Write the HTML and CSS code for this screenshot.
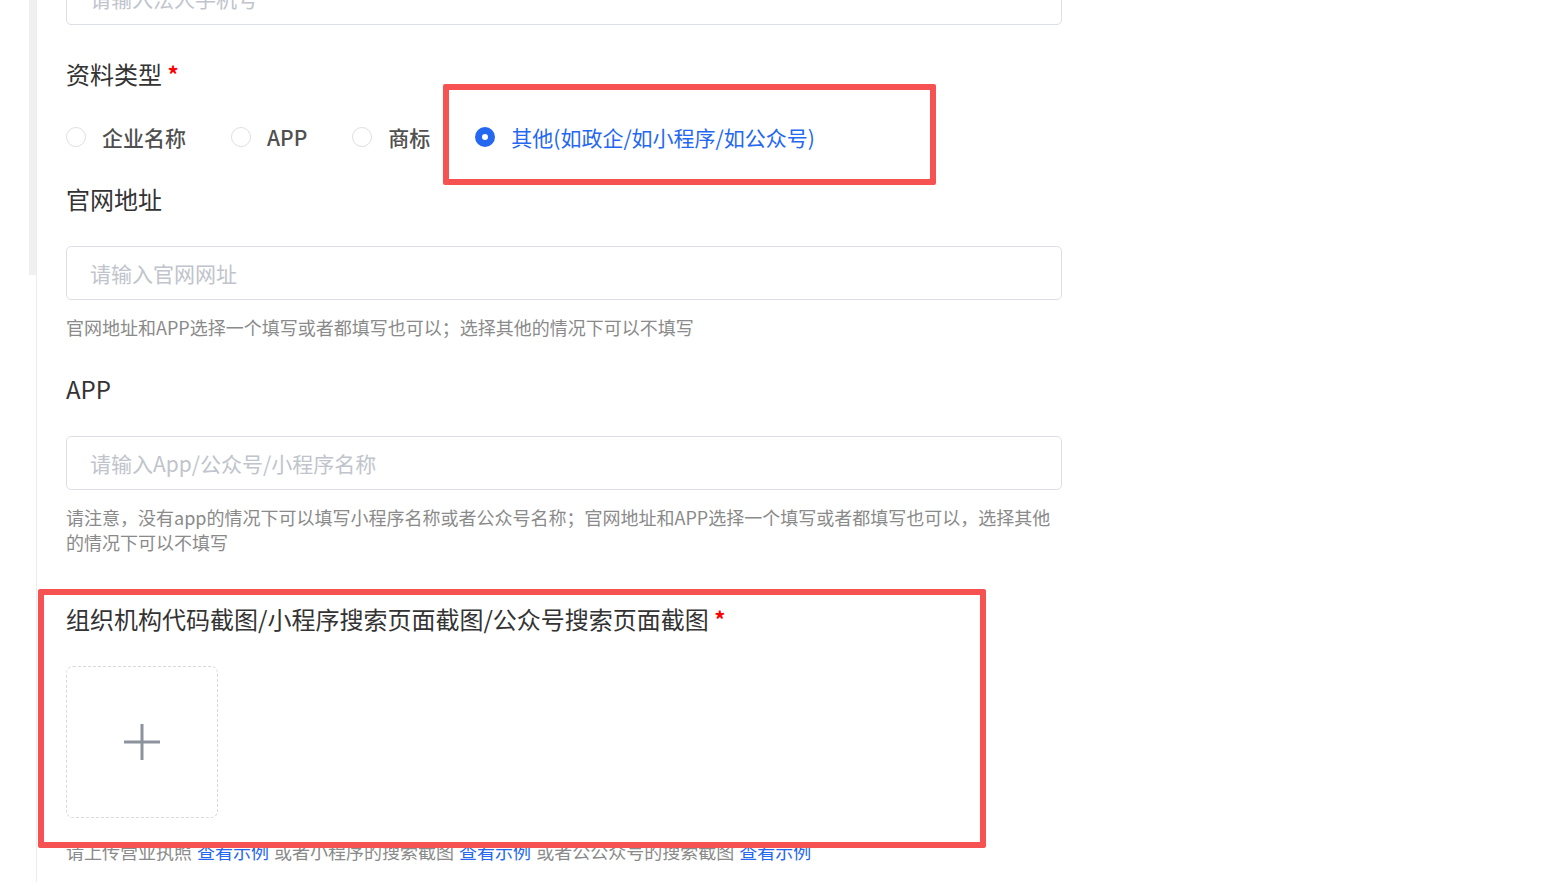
FILE: index.html
```html
<!DOCTYPE html>
<html lang="zh-CN">
<head>
<meta charset="utf-8">
<title>资料填写</title>
<link rel="stylesheet" href="styles.css">
</head>
<body>
<div class="page">
  <aside class="rail"><div class="rail-thumb"></div></aside>
  <main class="form">
    <div class="item item-top">
      <div class="input"><span class="placeholder">请输入法人手机号</span></div>
    </div>

    <div class="item item-radios">
      <div class="label">资料类型 <span class="req">*</span></div>
      <div class="radios">
        <label class="radio"><span class="dot"></span><span class="rtext">企业名称</span></label>
        <label class="radio"><span class="dot"></span><span class="rtext">APP</span></label>
        <label class="radio"><span class="dot"></span><span class="rtext">商标</span></label>
        <label class="radio checked"><span class="dot"></span><span class="rtext">其他(如政企/如小程序/如公众号)</span></label>
      </div>
    </div>

    <div class="item">
      <div class="label">官网地址</div>
      <div class="input"><span class="placeholder">请输入官网网址</span></div>
      <div class="hint">官网地址和APP选择一个填写或者都填写也可以；选择其他的情况下可以不填写</div>
    </div>

    <div class="item">
      <div class="label">APP</div>
      <div class="input"><span class="placeholder">请输入App/公众号/小程序名称</span></div>
      <div class="hint">请注意，没有app的情况下可以填写小程序名称或者公众号名称；官网地址和APP选择一个填写或者都填写也可以，选择其他的情况下可以不填写</div>
    </div>

    <div class="item item-upload">
      <div class="label">组织机构代码截图/小程序搜索页面截图/公众号搜索页面截图 <span class="req">*</span></div>
      <div class="upload">
        <svg width="38" height="38" viewBox="0 0 38 38"><path d="M19 1V37M1 19H37" stroke="#8c939d" stroke-width="3" fill="none"/></svg>
      </div>
      <div class="hint hint-bottom">请上传营业执照 <a class="link">查看示例</a> 或者小程序的搜索截图 <a class="link">查看示例</a> 或者公公众号的搜索截图 <a class="link">查看示例</a></div>
    </div>
  </main>
  <div class="mark mark-radio"></div>
  <div class="mark mark-upload"></div>
</div>
</body>
</html>
```

FILE: styles.css
```css
* { box-sizing: border-box; }
html, body { margin: 0; padding: 0; background: #fff; overflow: hidden; }
body {
  font-family: "Noto Sans CJK SC", "Noto Sans", sans-serif;
  color: #333;
  height: 882px;
}
.page {
  position: relative;
  display: flex;
  height: 882px;
}
.rail {
  width: 37px;
  flex: none;
  border-right: 1px solid #ececec;
  display: flex;
  justify-content: flex-end;
}
.rail-thumb {
  width: 7px;
  height: 275px;
  background: #f0f0f0;
}
.form {
  padding-left: 29px;
  width: 1025px;
}
.item-top { margin-top: -29px; margin-bottom: 34px; }
.item { margin-bottom: 33px; }
.item-radios { margin-bottom: 30px; }
.label {
  font-size: 24px;
  line-height: 32px;
  height: 32px;
  color: #333;
  margin-bottom: 31px;
  white-space: nowrap;
}
.req {
  color: #f00;
  font-size: 22px;
  font-weight: 700;
  line-height: 1;
  position: relative;
  top: -1px;
}
.input {
  height: 54px;
  width: 996px;
  border: 1px solid #dcdfe6;
  border-radius: 5px;
  display: flex;
  align-items: center;
  padding-left: 23px;
  font-size: 21px;
}
.placeholder { color: #c0c4cc; }
.hint {
  margin-top: 15px;
  font-size: 18px;
  line-height: 25px;
  color: #8a8a8a;
  width: 996px;
}
.radios {
  display: flex;
  align-items: center;
  height: 32px;
}
.radio {
  display: flex;
  align-items: center;
  gap: 16px;
  margin-right: 45px;
  font-size: 21px;
  font-weight: 500;
  color: #505050;
}
.dot {
  width: 20px;
  height: 20px;
  border-radius: 50%;
  border: 1px solid #dcdfe6;
  background: #fff;
  flex: none;
}
.radio.checked .dot {
  border: 7px solid #2468f2;
  background: #fff;
}
.radio.checked .rtext { color: #2468f2; font-weight: 400; }
.item-upload { margin-top: 48px; }
.upload {
  width: 152px;
  height: 152px;
  border: 1px dashed #d9d9d9;
  border-radius: 7px;
  display: flex;
  align-items: center;
  justify-content: center;
}
.hint-bottom { margin-top: 21px; white-space: nowrap; word-spacing: 1px; }
.link { color: #2468f2; text-decoration: none; }
.mark {
  position: absolute;
  border: 6px solid #f75252;
  border-radius: 2px;
}
.mark-radio { left: 443px; top: 84px; width: 493px; height: 101px; }
.mark-upload { left: 38px; top: 589px; width: 948px; height: 259px; }
```
